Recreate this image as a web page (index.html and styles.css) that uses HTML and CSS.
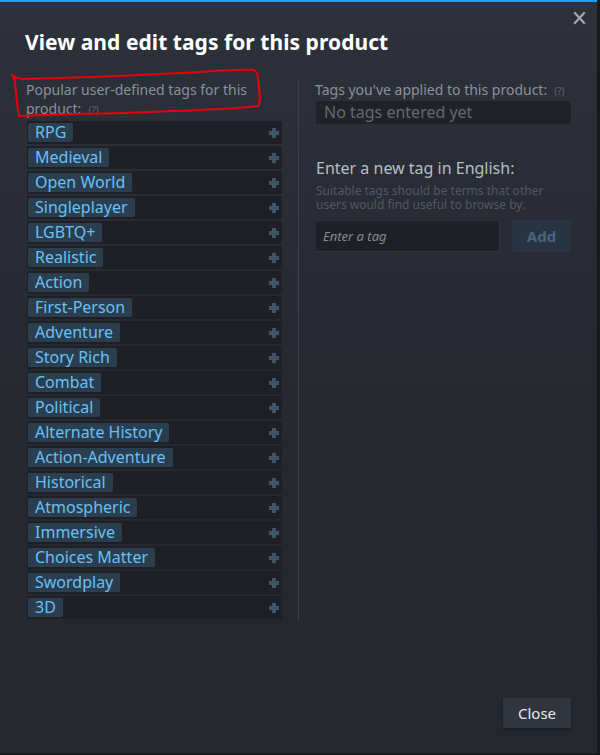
FILE: index.html
```html
<!DOCTYPE html>
<html>
<head>
<meta charset="utf-8">
<link rel="stylesheet" href="styles.css">
</head>
<body>
<div class="modal">
  <button class="close-x" aria-label="Close">
    <svg width="13" height="14" viewBox="0 0 13 14"><path d="M1.2 1.2 L11.8 12.8 M11.8 1.2 L1.2 12.8" stroke="#a3a8ad" stroke-width="2.2" fill="none"/></svg>
  </button>
  <h1 class="title">View and edit tags for this product</h1>
  <div class="columns">
    <div class="col-left">
      <div class="label"><span class="label-text">Popular user-defined tags for this product:</span><span class="help">(?)</span></div>
      <ul class="tags">
        <li class="row"><span class="pill">RPG</span><span class="plus"></span></li>
        <li class="row"><span class="pill">Medieval</span><span class="plus"></span></li>
        <li class="row"><span class="pill">Open World</span><span class="plus"></span></li>
        <li class="row"><span class="pill">Singleplayer</span><span class="plus"></span></li>
        <li class="row"><span class="pill">LGBTQ+</span><span class="plus"></span></li>
        <li class="row"><span class="pill">Realistic</span><span class="plus"></span></li>
        <li class="row"><span class="pill">Action</span><span class="plus"></span></li>
        <li class="row"><span class="pill">First-Person</span><span class="plus"></span></li>
        <li class="row"><span class="pill">Adventure</span><span class="plus"></span></li>
        <li class="row"><span class="pill">Story Rich</span><span class="plus"></span></li>
        <li class="row"><span class="pill">Combat</span><span class="plus"></span></li>
        <li class="row"><span class="pill">Political</span><span class="plus"></span></li>
        <li class="row"><span class="pill">Alternate History</span><span class="plus"></span></li>
        <li class="row"><span class="pill">Action-Adventure</span><span class="plus"></span></li>
        <li class="row"><span class="pill">Historical</span><span class="plus"></span></li>
        <li class="row"><span class="pill">Atmospheric</span><span class="plus"></span></li>
        <li class="row"><span class="pill">Immersive</span><span class="plus"></span></li>
        <li class="row"><span class="pill">Choices Matter</span><span class="plus"></span></li>
        <li class="row"><span class="pill">Swordplay</span><span class="plus"></span></li>
        <li class="row"><span class="pill">3D</span><span class="plus"></span></li>
      </ul>
    </div>
    <div class="divider"></div>
    <div class="col-right">
      <div class="label"><span class="label-text">Tags you've applied to this product:</span><span class="help">(?)</span></div>
      <div class="applied">No tags entered yet</div>
      <div class="new-title">Enter a new tag in English:</div>
      <div class="hint">Suitable tags should be terms that other users would find useful to browse by.</div>
      <div class="entry">
        <input class="tag-input" type="text" placeholder="Enter a tag">
        <button class="add-btn">Add</button>
      </div>
    </div>
  </div>
  <div class="footer">
    <button class="close-btn">Close</button>
  </div>
  <svg class="scribble" width="270" height="60" viewBox="0 0 270 60">
    <path d="M10 7 C14 9 16 12 24 11 C60 10 120 8 180 5 C215 3 240 1 252 2 C256 4 256 10 257 20 C258 28 259 34 256 38 C240 41 180 43 120 45 C70 46 35 47 17 48 C15 38 14 25 13 14 C12 10 11 8 10 7" stroke="#e8000b" stroke-width="2" fill="none" stroke-linecap="round" stroke-linejoin="round"/>
  </svg>
</div>
</body>
</html>
```

FILE: styles.css
```css
* { box-sizing: border-box; }
html, body { margin: 0; padding: 0; }
body {
  background: #17191d;
  width: 600px;
  height: 755px;
  overflow: hidden;
  font-family: "Noto Sans", "Liberation Sans", sans-serif;
}
.modal {
  position: relative;
  width: 597px;
  height: 753px;
  background: linear-gradient(180deg, #2d313a 0%, #262931 45%, #24272e 100%);
  border-top: 2px solid #1a9fff;
  padding: 0 27px 0 27px;
  display: flex;
  flex-direction: column;
}
.close-x {
  position: absolute;
  right: 11px;
  top: 9px;
  background: none;
  border: 0;
  padding: 0;
  width: 13px;
  height: 14px;
}
.close-x svg { display: block; }
.title {
  margin: 26px 0 0 -2px;
  font-size: 21px;
  line-height: 29px;
  font-weight: 700;
  color: #ffffff;
  letter-spacing: 0.05px;
}
.columns {
  margin-top: 23px;
  display: grid;
  grid-template-columns: 255px 1px 256px;
  column-gap: 16px;
}
.divider { background: #3b4049; }
.col-right { margin-left: 1px; }
.label {
  font-size: 14px;
  line-height: 19px;
  color: #8b929a;
  margin-left: -1px;
}
.help {
  display: inline-block;
  font-size: 10px;
  line-height: 12px;
  color: #5f666e;
  margin-left: 7px;
}
.col-left .label { height: 41px; }
.tags { list-style: none; margin: 0; padding: 0; }
.row {
  height: 23px;
  margin-bottom: 2px;
  background: #1f2025;
  display: flex;
  align-items: center;
  justify-content: space-between;
  padding: 0 3px 0 1px;
}
.pill {
  background: #2b3e50;
  color: #67c1f5;
  font-size: 16px;
  line-height: 19px;
  height: 19px;
  padding: 0 7px;
  border-radius: 2px;
  white-space: nowrap;
}
.plus {
  width: 10px;
  height: 10px;
  position: relative;
}
.plus::before, .plus::after {
  content: "";
  position: absolute;
  background: #3f5669;
}
.plus::before { left: 0; top: 3px; width: 10px; height: 4px; }
.plus::after { left: 3px; top: 0; width: 4px; height: 10px; }
.applied {
  margin-top: 2px;
  height: 23px;
  background: #202227;
  color: #636a72;
  font-size: 16px;
  line-height: 23px;
  padding-left: 8px;
}
.new-title {
  margin-top: 33px;
  font-size: 16px;
  line-height: 22px;
  color: #b8bec4;
}
.hint {
  margin-top: 5px;
  font-size: 12px;
  line-height: 14px;
  color: #515962;
  padding-right: 20px;
}
.entry {
  margin-top: 8px;
  display: flex;
  gap: 12px;
}
.tag-input {
  width: 184px;
  height: 31px;
  background: #1e2025;
  border: 0;
  border-right: 1px solid #33373f;
  border-bottom: 1px solid #33373f;
  border-radius: 2px;
  color: #c8ccd0;
  font-family: "Noto Sans", "Liberation Sans", sans-serif;
  font-size: 13px;
  padding: 0 7px;
  margin-top: 1px;
}
.tag-input::placeholder { color: #858b92; font-style: italic; }
.add-btn {
  width: 60px;
  height: 32px;
  background: #283442;
  border: 0;
  border-radius: 2px;
  color: #46657f;
  font-family: "Noto Sans", "Liberation Sans", sans-serif;
  font-size: 15px;
  font-weight: 700;
  padding: 0;
}
.footer {
  margin-top: auto;
  padding-bottom: 25px;
  display: flex;
  justify-content: flex-end;
}
.close-btn {
  width: 68px;
  height: 30px;
  background: #30353e;
  border: 0;
  border-radius: 2px;
  color: #e6e9ec;
  font-family: "Noto Sans", "Liberation Sans", sans-serif;
  font-size: 15px;
  padding: 0;
  box-shadow: 0 1px 3px rgba(0,0,0,0.35);
  margin-right: -1px;
}
.scribble {
  position: absolute;
  left: 2px;
  top: 66px;
  pointer-events: none;
}
```
